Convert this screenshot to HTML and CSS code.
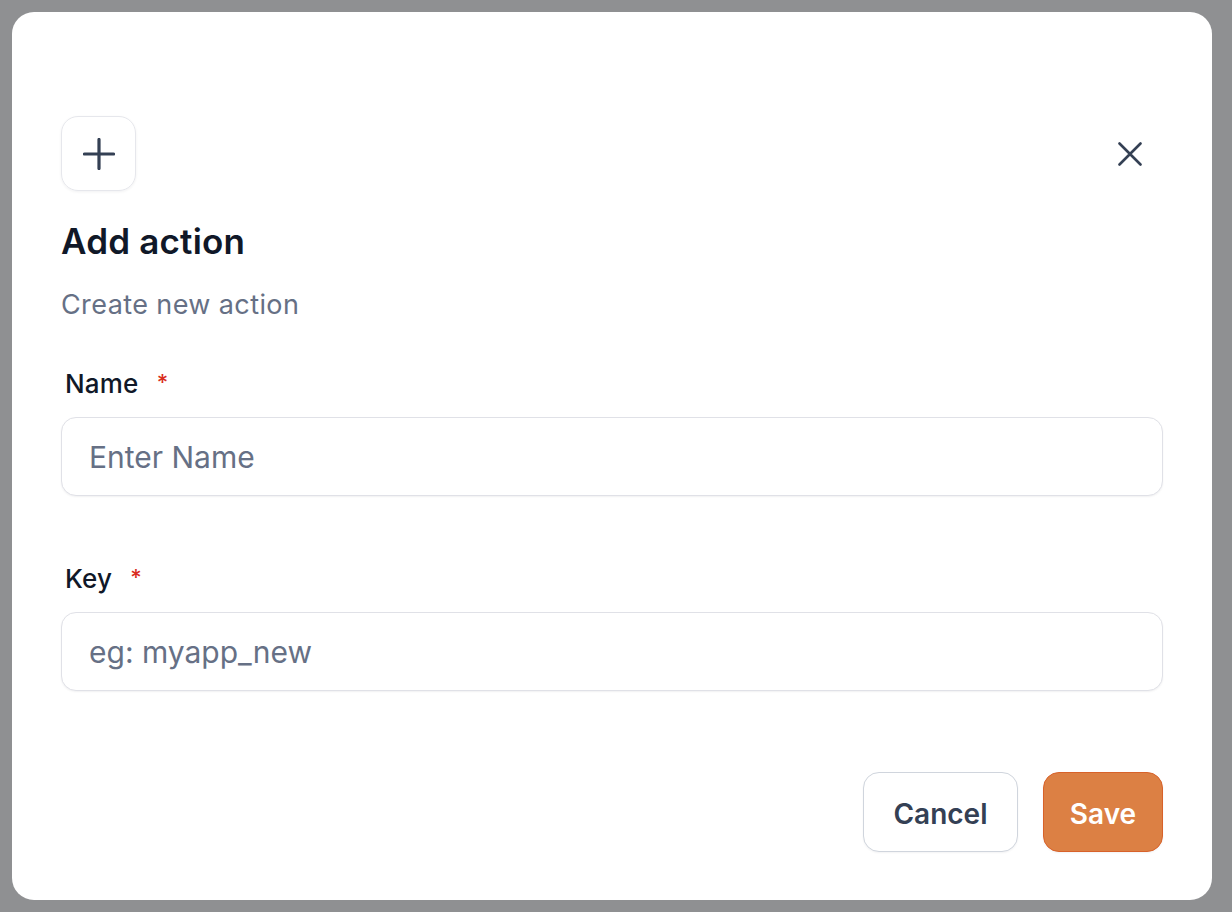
FILE: index.html
```html
<!DOCTYPE html>
<html lang="en">
<head>
<meta charset="utf-8">
<title>Add action</title>
<link rel="stylesheet" href="styles.css">
</head>
<body>
<div class="modal">
  <div class="modal-header">
    <div class="icon-box">
      <svg width="32" height="32" viewBox="0 0 32 32" fill="none" stroke="#344054" stroke-width="3.2" stroke-linecap="round">
        <path d="M16 1.5V30.5M1.5 16H30.5"/>
      </svg>
    </div>
    <button class="close-btn" aria-label="Close">
      <svg width="24" height="24" viewBox="0 0 24 24" fill="none" stroke="#344054" stroke-width="2.6" stroke-linecap="round">
        <path d="M1.5 1.5L22.5 22.5M22.5 1.5L1.5 22.5"/>
      </svg>
    </button>
  </div>
  <h2 class="title">Add action</h2>
  <p class="subtitle">Create new action</p>
  <div class="field field-first">
    <label class="label">Name <span class="req">*</span></label>
    <input class="input" type="text" placeholder="Enter Name">
  </div>
  <div class="field field-second">
    <label class="label">Key <span class="req">*</span></label>
    <input class="input" type="text" placeholder="eg: myapp_new">
  </div>
  <div class="actions">
    <button class="btn btn-cancel">Cancel</button>
    <button class="btn btn-save">Save</button>
  </div>
</div>
</body>
</html>
```

FILE: styles.css
```css
* { box-sizing: border-box; }
html, body {
  margin: 0;
  padding: 0;
  height: 100%;
}
body {
  background: #8f9092;
  font-family: Inter, "Noto Sans", sans-serif;
  padding: 12px 20px 12px 12px;
}
.modal {
  width: 1200px;
  height: 888px;
  background: #ffffff;
  border-radius: 22px;
  padding: 104px 49px 48px 49px;
  display: flex;
  flex-direction: column;
}
.modal-header {
  display: flex;
  justify-content: space-between;
  align-items: center;
}
.icon-box {
  width: 75px;
  height: 75px;
  border: 1.5px solid #e6e7ec;
  border-radius: 17px;
  display: flex;
  align-items: center;
  justify-content: center;
  box-shadow: 0 1px 3px rgba(16, 24, 40, 0.06);
}
.close-btn {
  width: 44px;
  height: 44px;
  margin-right: 11px;
  border: none;
  background: transparent;
  padding: 0;
  display: flex;
  align-items: center;
  justify-content: center;
}
.title {
  margin: 28px 0 0 0;
  font-size: 35px;
  line-height: 44px;
  font-weight: 600;
  color: #101828;
  letter-spacing: 0.2px;
}
.subtitle {
  margin: 24px 0 0 0;
  font-size: 27px;
  line-height: 36px;
  font-weight: 400;
  color: #667085;
  letter-spacing: 0.4px;
}
.field {
  display: flex;
  flex-direction: column;
}
.field-first { margin-top: 41px; }
.field-second { margin-top: 63px; }
.label {
  font-size: 26px;
  line-height: 36px;
  font-weight: 500;
  color: #101828;
  padding-left: 4px;
  letter-spacing: 0.2px;
}
.req {
  color: #d92d20;
  margin-left: 11px;
  font-size: 22px;
  vertical-align: 3px;
}
.input {
  margin-top: 15px;
  height: 79px;
  width: 100%;
  border: 1.5px solid #e0e1e7;
  border-radius: 15px;
  padding: 0 27px;
  font-family: Inter, "Noto Sans", sans-serif;
  font-size: 30px;
  color: #101828;
  background: #ffffff;
  box-shadow: 0 1px 2px rgba(16, 24, 40, 0.06);
  outline: none;
}
.input::placeholder {
  color: #667085;
  opacity: 1;
}
.actions {
  margin-top: auto;
  display: flex;
  justify-content: flex-end;
  gap: 25px;
}
.btn {
  height: 80px;
  border-radius: 16px;
  font-family: Inter, "Noto Sans", sans-serif;
  font-size: 28px;
  font-weight: 600;
  padding: 3px 0 0 0;
  box-shadow: 0 1px 2px rgba(16, 24, 40, 0.05);
}
.btn-cancel {
  width: 155px;
  background: #ffffff;
  border: 1.5px solid #d0d5dd;
  color: #344054;
}
.btn-save {
  width: 120px;
  background: #dc8044;
  border: 1.5px solid #d8622a;
  color: #ffffff;
}
```
